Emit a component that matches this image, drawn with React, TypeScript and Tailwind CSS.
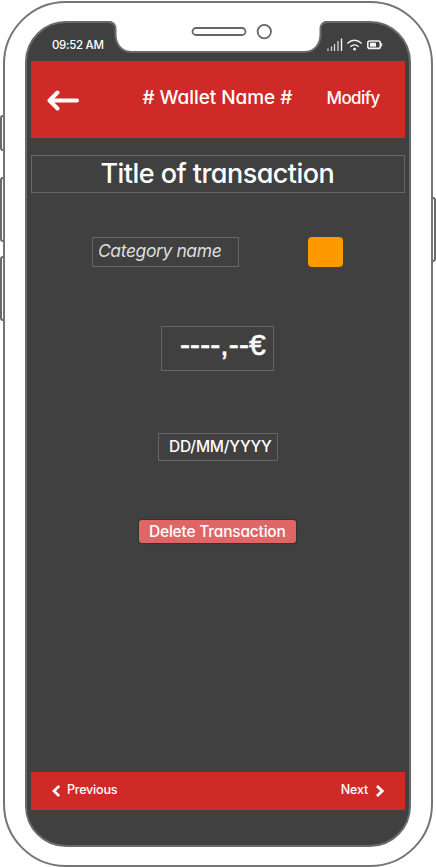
import React from "react";

function SideButton({ className }: { className: string }) {
  return <span className={`absolute border-2 border-[#6a6a6a] bg-white ${className}`} />;
}

function Notch() {
  return (
    <svg className="absolute left-0 top-0" width="436" height="70" viewBox="0 0 436 70" fill="none">
      <path
        d="M107 20.5H108C113 21 115.5 24 115.5 28V34C115.5 45 122 52 132 52H304C314 52 320.5 45 320.5 34V28C320.5 24 323 21 328 20.5H329Z"
        fill="white"
      />
      <path
        d="M105 21.9H108C113 22 115.5 24.5 115.5 29V34C115.5 45 122 52 132 52H304C314 52 320.5 45 320.5 34V29C320.5 24.5 323 22 328 21.9H331"
        stroke="#6a6a6a"
        strokeWidth="2"
      />
      <rect x="192.5" y="28" width="53" height="7" rx="3.5" stroke="#666" strokeWidth="1.8" />
      <circle cx="264.3" cy="31.6" r="6.7" stroke="#666" strokeWidth="1.8" />
    </svg>
  );
}

function StatusIcons() {
  return (
    <svg width="56" height="14" viewBox="0 0 56 14" fill="none" stroke="#f4f4f4">
      <path d="M1 13V10.5M4.5 13V8.5M7.5 13V6M11 13V3" stroke="#d4d4d4" strokeWidth="1.3" />
      <path d="M14.5 13V0.5" strokeWidth="1.4" />
      <path d="M20.3 5.5Q27.5 -1 34.7 5.5M23.3 8.7Q27.5 5 31.7 8.7" strokeWidth="1.3" />
      <circle cx="27.6" cy="11.2" r="1.4" fill="#f4f4f4" stroke="none" />
      <rect x="40.8" y="3" width="12.5" height="7.4" rx="2" strokeWidth="1.6" />
      <rect x="43" y="4.7" width="6" height="4" fill="#f4f4f4" stroke="none" />
      <path d="M54.7 5V8.4" />
    </svg>
  );
}

export default function App() {
  return (
    <div className="relative h-[867px] w-[436px] overflow-hidden bg-white pl-[3px] pt-px font-['Inter','Liberation_Sans',sans-serif] font-medium text-white [font-feature-settings:'cv11']">
      <SideButton className="left-0 top-[115px] h-[36px] w-[8px] rounded-[3px]" />
      <SideButton className="left-0 top-[177px] h-[65px] w-[8px] rounded-[3px]" />
      <SideButton className="left-0 top-[256px] h-[65px] w-[8px] rounded-[3px]" />
      <SideButton className="left-[429px] top-[197px] h-[65px] w-[7px] rounded-[3px]" />
      <div className="relative h-[866px] w-[430px] rounded-[63px] border-2 border-[#757575] bg-white pl-[20px] pt-[18px]">
        <div className="flex h-[826px] w-[386px] flex-col rounded-[41px] border-2 border-[#6a6a6a] bg-[#404040] px-[4px]">
          <div className="flex h-[38px] shrink-0 justify-between pl-[21px] pr-[22px] pt-[15px]">
            <span className="text-[11.5px] leading-[14px] tracking-[-0.3px]">09:52 AM</span>
            <StatusIcons />
          </div>
          <header className="flex h-[77px] shrink-0 items-center bg-[#cf2a27] pl-[16px]">
            <svg width="32" height="22" viewBox="0 0 32 22" fill="none" stroke="white" strokeWidth="4" strokeLinecap="round" strokeLinejoin="round">
              <path d="M30 11.5H3M10.5 3.5L2.5 11.5L10.5 19.5" />
            </svg>
            <h1 className="-mt-[4px] ml-[63.5px] w-[150px] whitespace-nowrap text-[19px] font-medium leading-[24px] tracking-[-0.06px]">
              # Wallet Name #
            </h1>
            <button className="-mt-[3px] ml-[34px] whitespace-nowrap text-[17px] leading-[24px] tracking-[-0.6px]">Modify</button>
          </header>
          <main className="flex flex-col">
            <div className="mt-[17px] h-[38px] border border-[#666] pl-[68.5px] text-[27px] leading-[36px] tracking-[-0.55px]">
              <span className="whitespace-nowrap">Title of transaction</span>
            </div>
            <div className="mt-[44px] flex pl-[61px]">
              <div className="h-[30px] w-[147px] whitespace-nowrap border border-[#666] pl-[5px] text-[17.5px] font-normal italic leading-[26px] tracking-[-0.4px] text-[#dedede]">
                Category name
              </div>
              <div className="ml-[69px] h-[30px] w-[35px] rounded-[4px] bg-[#ff9900]" />
            </div>
            <div className="ml-[130px] mt-[59px] h-[45px] w-[113px] whitespace-nowrap border border-[#666] pl-[18px] font-['Liberation_Sans',sans-serif] text-[30px] font-normal leading-[35px] tracking-[0.1px] [-webkit-text-stroke:0.6px_white]">
              ----,--€
            </div>
            <div className="ml-[127px] mt-[62px] h-[28px] w-[120px] whitespace-nowrap border border-[#666] pl-[10px] text-[15.5px] leading-[25px] tracking-[-0.2px]">
              DD/MM/YYYY
            </div>
            <button className="ml-[108px] mt-[59px] h-[23px] w-[157px] whitespace-nowrap rounded-[3px] bg-[#e06666] pl-[10px] pb-px text-left text-[15.5px] leading-[21px] tracking-[-0.2px] shadow-[0_0_1px_1px_rgba(0,0,0,0.2)]">
              Delete Transaction
            </button>
          </main>
          <nav className="mt-[229px] flex h-[38px] shrink-0 items-center justify-between bg-[#cf2a27] pl-[21px] pr-[21px] text-[12.5px] leading-[16px] tracking-[-0.2px]">
            <button className="-mt-px flex items-center gap-[7px]">
              <svg width="8" height="12" viewBox="0 0 8 12" fill="none" stroke="white" strokeWidth="2.7">
                <path d="M7.2 1L2 6L7.2 11" />
              </svg>
              <span className="-mt-px">Previous</span>
            </button>
            <button className="-mt-px flex items-center gap-[8px]">
              <span className="-mt-px">Next</span>
              <svg width="8" height="12" viewBox="0 0 8 12" fill="none" stroke="white" strokeWidth="2.7">
                <path d="M1 1L6.2 6L1 11" />
              </svg>
            </button>
          </nav>
        </div>
      </div>
      <Notch />
    </div>
  );
}
